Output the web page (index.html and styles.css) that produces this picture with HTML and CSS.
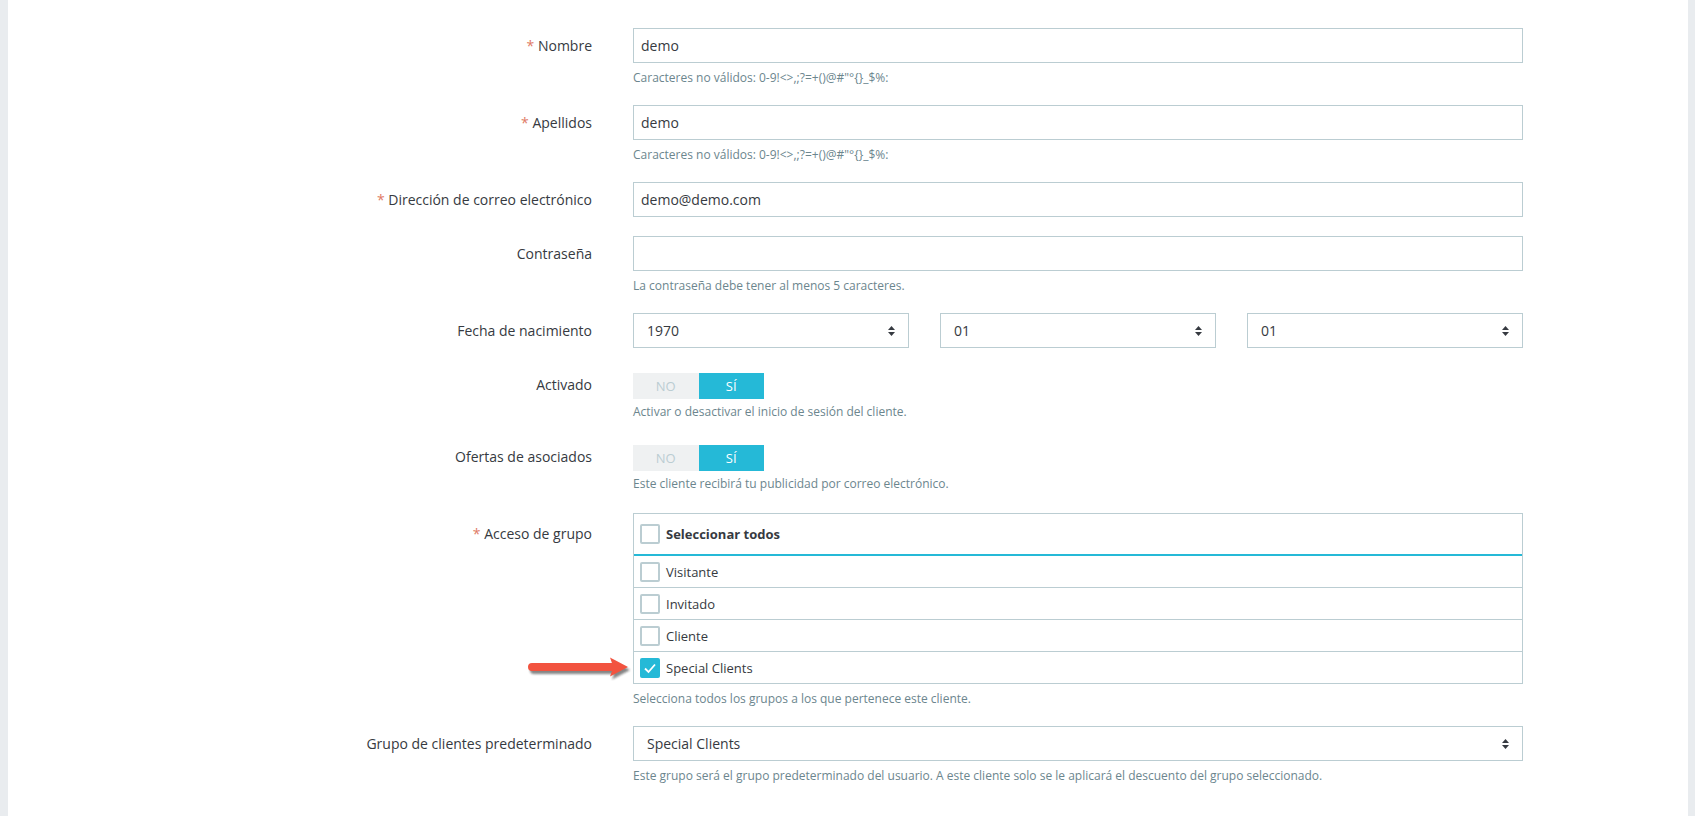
FILE: index.html
```html
<!DOCTYPE html>
<html lang="es">
<head>
  <meta charset="UTF-8">
  <title>Cliente</title>
  <meta name="viewport" content="width=device-width, initial-scale=1.0">
  <link rel="stylesheet" href="styles.css">
</head>
<body>
  <div class="panel">
    <form class="customer-form">

      <div class="form-group">
        <label class="form-label"><span class="required">*</span> Nombre</label>
        <div class="form-field">
          <input type="text" class="form-input" value="demo">
          <p class="help">Caracteres no válidos: 0-9!&lt;&gt;,;?=+()@#"°{}_$%:</p>
        </div>
      </div>

      <div class="form-group">
        <label class="form-label"><span class="required">*</span> Apellidos</label>
        <div class="form-field">
          <input type="text" class="form-input" value="demo">
          <p class="help">Caracteres no válidos: 0-9!&lt;&gt;,;?=+()@#"°{}_$%:</p>
        </div>
      </div>

      <div class="form-group">
        <label class="form-label"><span class="required">*</span> Dirección de correo electrónico</label>
        <div class="form-field">
          <input type="text" class="form-input" value="demo@demo.com">
        </div>
      </div>

      <div class="form-group">
        <label class="form-label">Contraseña</label>
        <div class="form-field">
          <input type="password" class="form-input" value="">
          <p class="help">La contraseña debe tener al menos 5 caracteres.</p>
        </div>
      </div>

      <div class="form-group">
        <label class="form-label">Fecha de nacimiento</label>
        <div class="form-field date-row">
          <div class="select"><span>1970</span><svg class="select-arrow" width="7" height="10" viewBox="0 0 7 10"><path d="M0 4 3.5 0 7 4z M0 6 3.5 10 7 6z"/></svg></div>
          <div class="select"><span>01</span><svg class="select-arrow" width="7" height="10" viewBox="0 0 7 10"><path d="M0 4 3.5 0 7 4z M0 6 3.5 10 7 6z"/></svg></div>
          <div class="select"><span>01</span><svg class="select-arrow" width="7" height="10" viewBox="0 0 7 10"><path d="M0 4 3.5 0 7 4z M0 6 3.5 10 7 6z"/></svg></div>
        </div>
      </div>

      <div class="form-group switch-group">
        <label class="form-label">Activado</label>
        <div class="form-field">
          <div class="switch"><span class="switch-off">NO</span><span class="switch-on">SÍ</span></div>
          <p class="help">Activar o desactivar el inicio de sesión del cliente.</p>
        </div>
      </div>

      <div class="form-group switch-group">
        <label class="form-label">Ofertas de asociados</label>
        <div class="form-field">
          <div class="switch"><span class="switch-off">NO</span><span class="switch-on">SÍ</span></div>
          <p class="help">Este cliente recibirá tu publicidad por correo electrónico.</p>
        </div>
      </div>

      <div class="form-group list-group">
        <label class="form-label"><span class="required">*</span> Acceso de grupo</label>
        <div class="form-field">
          <div class="check-list">
            <div class="check-head"><span class="checkbox"></span>Seleccionar todos</div>
            <div class="check-row"><span class="checkbox"></span>Visitante</div>
            <div class="check-row"><span class="checkbox"></span>Invitado</div>
            <div class="check-row"><span class="checkbox"></span>Cliente</div>
            <div class="check-row pointed">
              <span class="checkbox checked"><svg width="20" height="20" viewBox="0 0 20 20"><polyline points="5,10.5 8.5,14 15,6.5" fill="none" stroke="#fff" stroke-width="1.8"/></svg></span>Special Clients
              <svg class="pointer-arrow" width="104" height="28" viewBox="0 0 104 28">
                <defs>
                  <filter id="arrowShadow" x="-10%" y="-30%" width="130%" height="180%">
                    <feGaussianBlur stdDeviation="1.2"/>
                  </filter>
                </defs>
                <path d="M4 9 L84 9 L82 3.5 L100 13 L82 22.5 L84 17 L4 17 A4 4 0 0 1 4 9 Z" fill="#222" opacity="0.55" filter="url(#arrowShadow)" transform="translate(2 3)"/>
                <path d="M4 9 L84 9 L82 3.5 L100 13 L82 22.5 L84 17 L4 17 A4 4 0 0 1 4 9 Z" fill="#f2533f"/>
              </svg>
            </div>
          </div>
          <p class="help">Selecciona todos los grupos a los que pertenece este cliente.</p>
        </div>
      </div>

      <div class="form-group">
        <label class="form-label">Grupo de clientes predeterminado</label>
        <div class="form-field">
          <div class="select"><span>Special Clients</span><svg class="select-arrow" width="7" height="10" viewBox="0 0 7 10"><path d="M0 4 3.5 0 7 4z M0 6 3.5 10 7 6z"/></svg></div>
          <p class="help">Este grupo será el grupo predeterminado del usuario. A este cliente solo se le aplicará el descuento del grupo seleccionado.</p>
        </div>
      </div>

    </form>
  </div>
</body>
</html>
```

FILE: styles.css
```css
* {
  box-sizing: border-box;
}

body {
  margin: 0;
  background: #e9ecef;
  font-family: 'Open Sans', 'Noto Sans', sans-serif;
  font-size: 13px;
  color: #363a41;
}

.panel {
  background: #fff;
  margin: 0 7px 0 8px;
  min-height: 100vh;
  padding-top: 28px;
}

.form-group {
  display: grid;
  grid-template-columns: 584px 890px;
  column-gap: 41px;
  margin-bottom: 19px;
}

.form-label {
  text-align: right;
  padding-top: 8px;
  line-height: 19px;
  font-size: 14px;
  color: #363a41;
}

.required {
  color: #e07a66;
}

.form-input {
  display: block;
  width: 100%;
  height: 35px;
  padding: 0 7px;
  border: 1px solid #bbcdd2;
  border-radius: 0;
  background: #fff;
  font-family: inherit;
  font-size: 14px;
  color: #363a41;
  outline: none;
}

.help {
  margin: 6px 0 0;
  font-size: 12px;
  line-height: 17px;
  color: #6c868e;
}

/* selects */
.select {
  display: flex;
  align-items: center;
  justify-content: space-between;
  height: 35px;
  padding: 0 13px 0 13px;
  border: 1px solid #bbcdd2;
  background: #fff;
  font-size: 14px;
  color: #363a41;
}

.select-arrow {
  fill: #363a41;
}

.date-row {
  display: grid;
  grid-template-columns: repeat(3, 1fr);
  column-gap: 31px;
}

/* switches */
.switch-group .form-field {
  padding-top: 6px;
}

.switch-group .help {
  margin-top: 4px;
}

.switch {
  display: flex;
  width: 131px;
  height: 26px;
  font-size: 13px;
  text-transform: uppercase;
}

.switch span {
  flex: 1;
  display: flex;
  align-items: center;
  justify-content: center;
}

.switch-off {
  background: #eff1f2;
  color: #bbcdd2;
}

.switch-on {
  background: #25b9d7;
  color: #fff;
}

/* group list */
.list-group .form-field {
  padding-top: 2px;
}

.list-group .form-label {
  padding-top: 13px;
}

.check-list {
  border: 1px solid #bbcdd2;
}

.check-head,
.check-row {
  display: flex;
  align-items: center;
  gap: 6px;
  padding-left: 6px;
  font-size: 13px;
}

.check-head {
  height: 42px;
  border-bottom: 2px solid #25b9d7;
  font-weight: 700;
}

.check-row {
  height: 31px;
}

.check-row + .check-row {
  height: 32px;
  border-top: 1px solid #bbcdd2;
}

.checkbox {
  width: 20px;
  height: 20px;
  border: 2px solid #bbcdd2;
  border-radius: 2px;
  background: #fff;
  flex-shrink: 0;
}

.checkbox.checked {
  border: none;
  background: #25b9d7;
}

.checkbox svg {
  display: block;
}

.pointed {
  position: relative;
}

.pointer-arrow {
  position: absolute;
  left: -106px;
  top: 50%;
  transform: translateY(-50%);
  overflow: visible;
}
```
